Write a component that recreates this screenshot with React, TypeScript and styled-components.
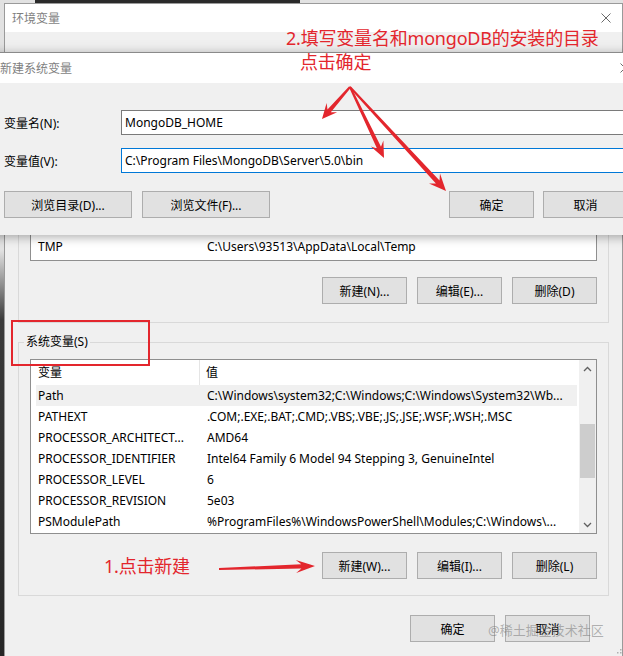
import React from "react";
import styled, { createGlobalStyle } from "styled-components";

const Global = createGlobalStyle`
  html, body { margin: 0; padding: 0; }
  body {
    background: #2b2b2b;
    font-family: "Noto Sans", "Noto Sans CJK SC", sans-serif;
    font-size: 12px;
    color: #000;
  }
  #root { width: 623px; height: 656px; }
`;

const Page = styled.div`
  position: relative;
  width: 623px;
  height: 656px;
  overflow: hidden;
  box-sizing: border-box;
  padding: 3px 0 0 4px;
  background:
    linear-gradient(#2a2a2a, #2a2a2a) 35px 0 / 265px 3px no-repeat,
    linear-gradient(to bottom, #e2e2e2 0, #e2e2e2 250px, #3a3a3a 320px, #262626 100%);
`;

const Window = styled.div`
  width: 619px;
  height: 700px;
  box-sizing: border-box;
  background: #f0f0f0;
  border: 1px solid #9a9a9a;
  display: flex;
  flex-direction: column;
`;

const TitleBar = styled.div`
  height: 28px;
  flex: none;
  background: #fff;
  display: flex;
  align-items: center;
  justify-content: space-between;
  padding: 0 11px 0 7px;
  color: #7f7f7f;
`;

const Body = styled.div`
  padding: 25px 13px 0 13px;
  display: flex;
  flex-direction: column;
`;

const Group = styled.fieldset<{ $top: number; $bottom: number }>`
  margin: ${(p) => p.$top}px 0 0 0;
  min-width: 0;
  border: 1px solid #d9d9d9;
  padding: 7px 11px ${(p) => p.$bottom}px 11px;
  display: flex;
  flex-direction: column;
`;

const GroupLegend = styled.legend`
  margin-left: -6px;
  padding: 0 2px;
  line-height: 20px;
  font-size: 12px;
`;

const ListBox = styled.div<{ $h: number }>`
  height: ${(p) => p.$h}px;
  box-sizing: border-box;
  border: 1px solid #8f8f8f;
  background: #fff;
  display: flex;
  overflow: hidden;
`;

const ListContent = styled.div`
  flex: 1;
  min-width: 0;
  display: flex;
  flex-direction: column;
  padding: 0 2px 0 5px;
`;

const HeaderRow = styled.div`
  display: grid;
  grid-template-columns: 164px 1fr;
  height: 25px;
  line-height: 25px;
  flex: none;
`;

const HeaderCell = styled.div<{ $first?: boolean }>`
  padding-left: ${(p) => (p.$first ? 2 : 6)}px;
  border-right: ${(p) => (p.$first ? "1px solid #e5e5e5" : "none")};
  white-space: nowrap;
`;

const Row = styled.div<{ $sel?: boolean }>`
  display: grid;
  grid-template-columns: 164px 1fr;
  height: 21px;
  line-height: 21px;
  flex: none;
  background: ${(p) => (p.$sel ? "#f0f0f0" : "transparent")};
`;

const Cell = styled.div<{ $first?: boolean }>`
  padding-left: ${(p) => (p.$first ? 2 : 7)}px;
  white-space: nowrap;
  overflow: hidden;
`;

const ScrollBar = styled.div`
  width: 17px;
  flex: none;
  background: #f0f0f0;
  display: flex;
  flex-direction: column;
`;

const ScrollArrow = styled.div`
  height: 17px;
  flex: none;
  display: flex;
  align-items: center;
  justify-content: center;
`;

const ScrollTrack = styled.div`
  flex: 1;
  display: flex;
  flex-direction: column;
`;

const Thumb = styled.div<{ $top: number; $h: number }>`
  margin: ${(p) => p.$top}px 1px 0 1px;
  height: ${(p) => p.$h}px;
  background: #cdcdcd;
`;

const ButtonRow = styled.div<{ $top: number; $right?: number }>`
  display: flex;
  justify-content: flex-end;
  gap: 10px;
  margin-top: ${(p) => p.$top}px;
  margin-right: ${(p) => p.$right ?? 0}px;
`;

const Btn = styled.button<{ $w: number }>`
  width: ${(p) => p.$w}px;
  height: 27px;
  box-sizing: border-box;
  padding: 0;
  background: #e1e1e1;
  border: 1px solid #adadad;
  font: inherit;
  color: #000;
  white-space: nowrap;
`;

/* New-variable dialog on top */
const Dialog = styled.div`
  position: absolute;
  top: 52px;
  left: -10px;
  width: 652px;
  background: #f0f0f0;
  border-top: 1px solid #8a8a8a;
  box-shadow: 0 3px 9px rgba(0, 0, 0, 0.28), 0 -4px 10px rgba(0, 0, 0, 0.06);
`;

const DialogTitle = styled.div`
  height: 30px;
  background: #fff;
  display: flex;
  align-items: center;
  justify-content: space-between;
  padding: 0 12px 0 10px;
  color: #7f7f7f;
`;

const DialogBody = styled.div`
  padding: 27px 14px 17px 14px;
  display: flex;
  flex-direction: column;
`;

const Fields = styled.div`
  display: grid;
  grid-template-columns: 117px 1fr;
  row-gap: 13px;
  align-items: center;
`;

const FieldLabel = styled.div`
  white-space: nowrap;
`;

const Input = styled.div<{ $focus?: boolean }>`
  height: 25px;
  box-sizing: border-box;
  border: 1px solid ${(p) => (p.$focus ? "#0078d7" : "#7a7a7a")};
  background: #fff;
  padding: 0 3px;
  line-height: 23px;
  white-space: nowrap;
`;

const DialogButtons = styled.div`
  display: flex;
  justify-content: space-between;
  margin-top: 18px;
`;

const BtnGroup = styled.div<{ $gap: number }>`
  display: flex;
  gap: ${(p) => p.$gap}px;
`;

/* Annotations */
const Note = styled.div<{ $x: number; $y: number }>`
  position: absolute;
  left: ${(p) => p.$x}px;
  top: ${(p) => p.$y}px;
  color: #e3262d;
  font-size: 18px;
  line-height: 24px;
  letter-spacing: -0.2px;
  white-space: nowrap;
`;

const NoteLine = styled.div<{ $indent?: number }>`
  padding-left: ${(p) => p.$indent ?? 0}px;
`;

const RedBox = styled.div`
  position: absolute;
  left: 11px;
  top: 320px;
  width: 139px;
  height: 46px;
  box-sizing: border-box;
  border: 2px solid #e3262d;
`;

const ArrowLayer = styled.svg`
  position: absolute;
  left: 0;
  top: 0;
  pointer-events: none;
`;

const Watermark = styled.div`
  position: absolute;
  left: 488px;
  top: 621px;
  font-size: 13px;
  line-height: 18px;
  color: rgba(120, 120, 120, 0.55);
  white-space: nowrap;
`;

const Grip = styled.svg`
  position: absolute;
  right: 1px;
  bottom: 1px;
`;

const CloseIcon = ({ color = "#5a5a5a" }: { color?: string }) => (
  <svg width="10" height="10" viewBox="0 0 10 10">
    <path d="M0.5 0.5 L9.5 9.5 M9.5 0.5 L0.5 9.5" stroke={color} strokeWidth="1" fill="none" />
  </svg>
);

const Chevron = ({ up }: { up?: boolean }) => (
  <svg width="9" height="6" viewBox="0 0 9 6">
    <path
      d={up ? "M1 5 L4.5 1.5 L8 5" : "M1 1 L4.5 4.5 L8 1"}
      stroke="#606060"
      strokeWidth="1.3"
      fill="none"
    />
  </svg>
);

const arrowPoints = (
  x1: number,
  y1: number,
  x2: number,
  y2: number,
  head = 16,
  wing = 7,
  neck = 2.4,
  tail = 0.8
) => {
  const dx = x2 - x1;
  const dy = y2 - y1;
  const L = Math.hypot(dx, dy);
  const ux = dx / L;
  const uy = dy / L;
  const nx = -uy;
  const ny = ux;
  const p = (d: number, w: number) => `${(x1 + ux * d + nx * w).toFixed(1)},${(y1 + uy * d + ny * w).toFixed(1)}`;
  return [
    p(0, tail),
    p(L - head * 0.72, neck),
    p(L - head, wing),
    p(L, 0),
    p(L - head, -wing),
    p(L - head * 0.72, -neck),
    p(0, -tail),
  ].join(" ");
};

const userRows: [string, string][] = [
  ["ChocolateyLastPathUpdate", "132876543210987654"],
  ["IntelliJ IDEA", "D:\\JetBrains\\IntelliJ IDEA\\bin;"],
  ["MOZ_PLUGIN_PATH", "C:\\Program Files (x86)\\Foxit Software\\Foxit Reader\\plugins\\"],
  ["OneDrive", "C:\\Users\\93513\\OneDrive"],
  ["Path", "C:\\Users\\93513\\AppData\\Local\\Microsoft\\WindowsApps;"],
  ["TEMP", "C:\\Users\\93513\\AppData\\Local\\Temp"],
  ["TMP", "C:\\Users\\93513\\AppData\\Local\\Temp"],
];

const sysRows: [string, string][] = [
  ["Path", "C:\\Windows\\system32;C:\\Windows;C:\\Windows\\System32\\Wb..."],
  ["PATHEXT", ".COM;.EXE;.BAT;.CMD;.VBS;.VBE;.JS;.JSE;.WSF;.WSH;.MSC"],
  ["PROCESSOR_ARCHITECT...", "AMD64"],
  ["PROCESSOR_IDENTIFIER", "Intel64 Family 6 Model 94 Stepping 3, GenuineIntel"],
  ["PROCESSOR_LEVEL", "6"],
  ["PROCESSOR_REVISION", "5e03"],
  ["PSModulePath", "%ProgramFiles%\\WindowsPowerShell\\Modules;C:\\Windows\\..."],
];

export default function App() {
  return (
    <>
      <Global />
      <Page>
        <Window>
          <TitleBar>
            <span>环境变量</span>
            <CloseIcon color="#6a6a6a" />
          </TitleBar>
          <Body>
            <Group $top={0} $bottom={18}>
              <GroupLegend>93513 的用户变量(U)</GroupLegend>
              <ListBox $h={177}>
                <ListContent>
                  <HeaderRow>
                    <HeaderCell $first>变量</HeaderCell>
                    <HeaderCell>值</HeaderCell>
                  </HeaderRow>
                  {userRows.map(([k, v]) => (
                    <Row key={k}>
                      <Cell $first>{k}</Cell>
                      <Cell>{v}</Cell>
                    </Row>
                  ))}
                </ListContent>
              </ListBox>
              <ButtonRow $top={16}>
                <Btn $w={85}>新建(N)...</Btn>
                <Btn $w={85}>编辑(E)...</Btn>
                <Btn $w={85}>删除(D)</Btn>
              </ButtonRow>
            </Group>

            <Group $top={9} $bottom={16}>
              <GroupLegend>系统变量(S)</GroupLegend>
              <ListBox $h={175}>
                <ListContent>
                  <HeaderRow>
                    <HeaderCell $first>变量</HeaderCell>
                    <HeaderCell>值</HeaderCell>
                  </HeaderRow>
                  {sysRows.map(([k, v], i) => (
                    <Row key={k} $sel={i === 0}>
                      <Cell $first>{k}</Cell>
                      <Cell>{v}</Cell>
                    </Row>
                  ))}
                </ListContent>
                <ScrollBar>
                  <ScrollArrow>
                    <Chevron up />
                  </ScrollArrow>
                  <ScrollTrack>
                    <Thumb $top={47} $h={54} />
                  </ScrollTrack>
                  <ScrollArrow>
                    <Chevron />
                  </ScrollArrow>
                </ScrollBar>
              </ListBox>
              <ButtonRow $top={18}>
                <Btn $w={85}>新建(W)...</Btn>
                <Btn $w={85}>编辑(I)...</Btn>
                <Btn $w={85}>删除(L)</Btn>
              </ButtonRow>
            </Group>

            <ButtonRow $top={19} $right={19}>
              <Btn $w={85}>确定</Btn>
              <Btn $w={85}>取消</Btn>
            </ButtonRow>
          </Body>
        </Window>

        <Dialog>
          <DialogTitle>
            <span>新建系统变量</span>
            <CloseIcon color="#6a6a6a" />
          </DialogTitle>
          <DialogBody>
            <Fields>
              <FieldLabel>变量名(N):</FieldLabel>
              <Input>MongoDB_HOME</Input>
              <FieldLabel>变量值(V):</FieldLabel>
              <Input $focus>C:\Program Files\MongoDB\Server\5.0\bin</Input>
            </Fields>
            <DialogButtons>
              <BtnGroup $gap={10}>
                <Btn $w={128}>浏览目录(D)...</Btn>
                <Btn $w={128}>浏览文件(F)...</Btn>
              </BtnGroup>
              <BtnGroup $gap={9}>
                <Btn $w={85}>确定</Btn>
                <Btn $w={85}>取消</Btn>
              </BtnGroup>
            </DialogButtons>
          </DialogBody>
        </Dialog>

        <RedBox />
        <Note $x={286} $y={26}>
          <NoteLine>2.填写变量名和mongoDB的安装的目录</NoteLine>
          <NoteLine $indent={14}>点击确定</NoteLine>
        </Note>
        <Note $x={104} $y={554}>
          <NoteLine>1.点击新建</NoteLine>
        </Note>

        <ArrowLayer width="623" height="656" viewBox="0 0 623 656">
          <g fill="#e3262d">
            <polygon points={arrowPoints(350, 87, 322, 119, 15, 7, 2.2, 1)} />
            <polygon points={arrowPoints(350, 87, 384, 158, 16, 7, 2.2, 1)} />
            <polygon points={arrowPoints(350, 87, 446, 191, 17, 7.5, 2.4, 1)} />
            <polygon points={arrowPoints(219, 569, 315, 566, 19, 6.5, 2.2, 1)} />
          </g>
        </ArrowLayer>

        <Watermark>@稀土掘金技术社区</Watermark>

        <Grip width="8" height="8" viewBox="0 0 8 8">
          <g fill="#b0b0b0">
            <rect x="6" y="2" width="1.5" height="1.5" />
            <rect x="3" y="5" width="1.5" height="1.5" />
            <rect x="6" y="5" width="1.5" height="1.5" />
          </g>
        </Grip>
      </Page>
    </>
  );
}
